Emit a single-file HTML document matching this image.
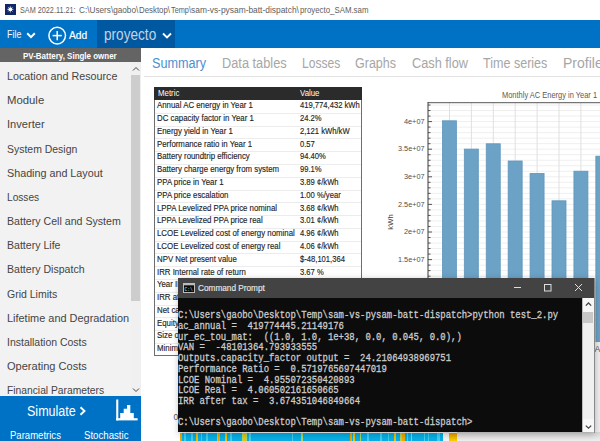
<!DOCTYPE html>
<html><head><meta charset="utf-8"><style>
html,body{margin:0;padding:0;width:600px;height:441px;overflow:hidden;background:#fff}
.r{position:absolute}
.t{position:absolute;white-space:nowrap;font-family:"Liberation Sans",sans-serif;transform-origin:0 0}
.m{position:absolute;white-space:pre;font-family:"Liberation Mono",monospace;color:#cccccc;-webkit-text-stroke:0.25px #cccccc;transform:scaleY(1.12)}
</style></head><body>
<div class="r" style="left:0px;top:0px;width:600px;height:20px;background:#ffffff;"></div>
<div class="r" style="left:5.2px;top:4px;width:10.7px;height:10.7px;background:#122766;"></div>
<svg class="r" style="left:5.2px;top:4px" width="11" height="11" viewBox="0 0 11 11"><g stroke="#fff" stroke-width="0.8" opacity="0.75"><line x1="5.35" y1="2.2" x2="5.35" y2="8.5"/><line x1="2.2" y1="5.35" x2="8.5" y2="5.35"/><line x1="3.1" y1="3.1" x2="7.6" y2="7.6"/><line x1="7.6" y1="3.1" x2="3.1" y2="7.6"/></g><circle cx="5.35" cy="5.35" r="1.9" fill="#fff"/></svg>
<div class="t" style="left:19.70px;top:5.20px;font-size:9.45px;line-height:9.45px;color:#606060;transform:scaleX(0.7690);">SAM 2022.11.21:</div>
<div class="t" style="left:79.20px;top:5.20px;font-size:9.45px;line-height:9.45px;color:#606060;transform:scaleX(0.8687);">C:\Users\gaobo\</div>
<div class="t" style="left:139.20px;top:5.20px;font-size:9.45px;line-height:9.45px;color:#606060;transform:scaleX(0.8315);">Desktop\</div>
<div class="t" style="left:171.00px;top:5.20px;font-size:9.45px;line-height:9.45px;color:#606060;transform:scaleX(0.7774);">Temp\</div>
<div class="t" style="left:191.30px;top:5.20px;font-size:9.45px;line-height:9.45px;color:#606060;transform:scaleX(0.8906);">sam-vs-pysam-batt-dispatch\</div>
<div class="t" style="left:300.00px;top:5.20px;font-size:9.45px;line-height:9.45px;color:#606060;transform:scaleX(0.8310);">proyecto_SAM.sam</div>
<div class="r" style="left:0px;top:20px;width:600px;height:28px;background:#0072c6;"></div>
<div class="r" style="left:97px;top:20px;width:78px;height:28px;background:#0058a0;"></div>
<div class="t" style="left:7.20px;top:30.09px;font-size:10.17px;line-height:10.17px;color:#f4f8fc;transform:scaleX(0.8784);">File</div>
<svg class="r" style="left:26px;top:32px" width="10" height="7" viewBox="0 0 10 7"><polyline points="1.2,1.3 5,5.1 8.8,1.3" fill="none" stroke="#fff" stroke-width="2"/></svg>
<svg class="r" style="left:47px;top:25px" width="21" height="21" viewBox="0 0 21 21"><circle cx="10.2" cy="10.6" r="8.3" fill="none" stroke="#fff" stroke-width="1.5"/><line x1="10.2" y1="6" x2="10.2" y2="15.2" stroke="#fff" stroke-width="1.5"/><line x1="5.6" y1="10.6" x2="14.8" y2="10.6" stroke="#fff" stroke-width="1.5"/></svg>
<div class="t" style="left:69.20px;top:28.96px;font-size:11.63px;line-height:11.63px;color:#ffffff;transform:scaleX(0.8797);-webkit-text-stroke:0.2px #fff;">Add</div>
<div class="t" style="left:104.30px;top:26.63px;font-size:15.80px;line-height:15.80px;color:#c4d4e8;transform:scaleX(0.8615);">proyecto</div>
<svg class="r" style="left:162px;top:32px" width="10" height="8" viewBox="0 0 10 8"><polyline points="1,1.5 5,5.5 9,1.5" fill="none" stroke="#fff" stroke-width="1.8"/></svg>
<div class="r" style="left:0px;top:48px;width:141px;height:14px;background:#646464;"></div>
<div class="t" style="left:23.00px;top:51.26px;font-size:9.74px;line-height:9.74px;color:#ffffff;font-weight:bold;transform:scaleX(0.8181);">PV-Battery, Single owner</div>
<div class="r" style="left:0px;top:62px;width:141px;height:334px;background:#f2f2f2;"></div>
<div class="r" style="left:130.5px;top:62px;width:10.5px;height:334px;background:#f0f0f0;"></div>
<div class="r" style="left:131px;top:75px;width:9px;height:226px;background:#cdcdcd;"></div>
<svg class="r" style="left:132px;top:66px" width="8" height="6" viewBox="0 0 8 6"><polyline points="1,4.5 4,1.5 7,4.5" fill="none" stroke="#444" stroke-width="1"/></svg>
<svg class="r" style="left:132px;top:387px" width="8" height="6" viewBox="0 0 8 6"><polyline points="1,1.5 4,4.5 7,1.5" fill="none" stroke="#444" stroke-width="1"/></svg>
<div class="t" style="left:7.00px;top:70.13px;font-size:11.77px;line-height:11.77px;color:#444444;transform:scaleX(0.9127);">Location and Resource</div>
<div class="t" style="left:7.00px;top:94.30px;font-size:11.77px;line-height:11.77px;color:#444444;transform:scaleX(0.9635);">Module</div>
<div class="t" style="left:7.00px;top:118.47px;font-size:11.77px;line-height:11.77px;color:#444444;transform:scaleX(0.9421);">Inverter</div>
<div class="t" style="left:7.00px;top:142.64px;font-size:11.77px;line-height:11.77px;color:#444444;transform:scaleX(0.8880);">System Design</div>
<div class="t" style="left:7.00px;top:166.81px;font-size:11.77px;line-height:11.77px;color:#444444;transform:scaleX(0.9138);">Shading and Layout</div>
<div class="t" style="left:7.00px;top:190.98px;font-size:11.77px;line-height:11.77px;color:#444444;transform:scaleX(0.8632);">Losses</div>
<div class="t" style="left:7.00px;top:215.15px;font-size:11.77px;line-height:11.77px;color:#444444;transform:scaleX(0.9012);">Battery Cell and System</div>
<div class="t" style="left:7.00px;top:239.32px;font-size:11.77px;line-height:11.77px;color:#444444;transform:scaleX(0.8985);">Battery Life</div>
<div class="t" style="left:7.00px;top:263.49px;font-size:11.77px;line-height:11.77px;color:#444444;transform:scaleX(0.8985);">Battery Dispatch</div>
<div class="t" style="left:7.00px;top:287.66px;font-size:11.77px;line-height:11.77px;color:#444444;transform:scaleX(0.8924);">Grid Limits</div>
<div class="t" style="left:7.00px;top:311.83px;font-size:11.77px;line-height:11.77px;color:#444444;transform:scaleX(0.9290);">Lifetime and Degradation</div>
<div class="t" style="left:7.00px;top:336.00px;font-size:11.77px;line-height:11.77px;color:#444444;transform:scaleX(0.8902);">Installation Costs</div>
<div class="t" style="left:7.00px;top:360.17px;font-size:11.77px;line-height:11.77px;color:#444444;transform:scaleX(0.9381);">Operating Costs</div>
<div class="t" style="left:7.00px;top:384.34px;font-size:11.77px;line-height:11.77px;color:#444444;transform:scaleX(0.8739);">Financial Parameters</div>
<div class="r" style="left:0px;top:396px;width:141px;height:45px;background:#0072c6;"></div>
<div class="t" style="left:26.70px;top:403.70px;font-size:14.53px;line-height:14.53px;color:#ffffff;transform:scaleX(0.8630);">Simulate</div>
<svg class="r" style="left:79px;top:406px" width="8" height="10" viewBox="0 0 8 10"><polyline points="1.5,1.2 5.5,5 1.5,8.8" fill="none" stroke="#fff" stroke-width="1.9"/></svg>
<svg class="r" style="left:115px;top:398px" width="24" height="24" viewBox="0 0 24 24"><rect x="1.2" y="1.5" width="2.1" height="20.9" fill="#fff"/><rect x="1.2" y="20.2" width="21.4" height="2.2" fill="#fff"/><path d="M5.2 21 V15.1 H8.7 V10.7 H12.1 V6.9 H15.3 V15.1 H18.8 V21 Z" fill="#fff"/></svg>
<div class="t" style="left:9.90px;top:430.05px;font-size:11.05px;line-height:11.05px;color:#ffffff;transform:scaleX(0.8638);">Parametrics</div>
<div class="t" style="left:83.50px;top:430.05px;font-size:11.05px;line-height:11.05px;color:#ffffff;transform:scaleX(0.8733);">Stochastic</div>
<div class="r" style="left:141px;top:48px;width:459px;height:393px;background:#ffffff;"></div>
<div class="r" style="left:144px;top:76px;width:456px;height:1px;background:#e3e3e3;"></div>
<div class="t" style="left:152.40px;top:55.54px;font-size:14.24px;line-height:14.24px;color:#4a90d0;transform:scaleX(0.8861);">Summary</div>
<div class="t" style="left:222.00px;top:55.54px;font-size:14.24px;line-height:14.24px;color:#a6a6a6;transform:scaleX(0.8980);">Data tables</div>
<div class="t" style="left:301.70px;top:55.54px;font-size:14.24px;line-height:14.24px;color:#a6a6a6;transform:scaleX(0.8487);">Losses</div>
<div class="t" style="left:355.00px;top:55.54px;font-size:14.24px;line-height:14.24px;color:#a6a6a6;transform:scaleX(0.8778);">Graphs</div>
<div class="t" style="left:411.70px;top:55.54px;font-size:14.24px;line-height:14.24px;color:#a6a6a6;transform:scaleX(0.8954);">Cash flow</div>
<div class="t" style="left:483.30px;top:55.54px;font-size:14.24px;line-height:14.24px;color:#a6a6a6;transform:scaleX(0.8813);">Time series</div>
<div class="t" style="left:563.30px;top:55.54px;font-size:14.24px;line-height:14.24px;color:#a6a6a6;transform:scaleX(0.9833);">Profile</div>
<div class="r" style="left:154px;top:87px;width:208px;height:13px;background:#2b2b2b;"></div>
<div class="t" style="left:157.50px;top:89.12px;font-size:8.72px;line-height:8.72px;color:#ffffff;transform:scaleX(0.9000);">Metric</div>
<div class="t" style="left:300.30px;top:89.12px;font-size:8.72px;line-height:8.72px;color:#ffffff;transform:scaleX(0.9000);">Value</div>
<div class="r" style="left:154px;top:100px;width:206px;height:254.8px;border:1px solid #6e6e6e;border-top:none;background:#fff"></div>
<div class="t" style="left:157.00px;top:101.23px;font-size:9.30px;line-height:9.30px;color:#1e1e1e;transform:scaleX(0.8438);-webkit-text-stroke:0.15px #1e1e1e;">Annual AC energy in Year 1</div>
<div class="t" style="left:300.00px;top:101.23px;font-size:9.30px;line-height:9.30px;color:#1e1e1e;transform:scaleX(0.8203);-webkit-text-stroke:0.15px #1e1e1e;">419,774,432 kWh</div>
<div class="r" style="left:155px;top:112.79px;width:206px;height:1px;background:#ececec;"></div>
<div class="t" style="left:157.00px;top:114.02px;font-size:9.30px;line-height:9.30px;color:#1e1e1e;transform:scaleX(0.8438);-webkit-text-stroke:0.15px #1e1e1e;">DC capacity factor in Year 1</div>
<div class="t" style="left:300.00px;top:114.02px;font-size:9.30px;line-height:9.30px;color:#1e1e1e;transform:scaleX(0.8203);-webkit-text-stroke:0.15px #1e1e1e;">24.2%</div>
<div class="r" style="left:155px;top:125.58px;width:206px;height:1px;background:#ececec;"></div>
<div class="t" style="left:157.00px;top:126.81px;font-size:9.30px;line-height:9.30px;color:#1e1e1e;transform:scaleX(0.8437);-webkit-text-stroke:0.15px #1e1e1e;">Energy yield in Year 1</div>
<div class="t" style="left:300.00px;top:126.81px;font-size:9.30px;line-height:9.30px;color:#1e1e1e;transform:scaleX(0.8203);-webkit-text-stroke:0.15px #1e1e1e;">2,121 kWh/kW</div>
<div class="r" style="left:155px;top:138.37px;width:206px;height:1px;background:#ececec;"></div>
<div class="t" style="left:157.00px;top:139.60px;font-size:9.30px;line-height:9.30px;color:#1e1e1e;transform:scaleX(0.8438);-webkit-text-stroke:0.15px #1e1e1e;">Performance ratio in Year 1</div>
<div class="t" style="left:300.00px;top:139.60px;font-size:9.30px;line-height:9.30px;color:#1e1e1e;transform:scaleX(0.8203);-webkit-text-stroke:0.15px #1e1e1e;">0.57</div>
<div class="r" style="left:155px;top:151.16px;width:206px;height:1px;background:#ececec;"></div>
<div class="t" style="left:157.00px;top:152.39px;font-size:9.30px;line-height:9.30px;color:#1e1e1e;transform:scaleX(0.8438);-webkit-text-stroke:0.15px #1e1e1e;">Battery roundtrip efficiency</div>
<div class="t" style="left:300.00px;top:152.39px;font-size:9.30px;line-height:9.30px;color:#1e1e1e;transform:scaleX(0.8203);-webkit-text-stroke:0.15px #1e1e1e;">94.40%</div>
<div class="r" style="left:155px;top:163.95px;width:206px;height:1px;background:#ececec;"></div>
<div class="t" style="left:157.00px;top:165.18px;font-size:9.30px;line-height:9.30px;color:#1e1e1e;transform:scaleX(0.8438);-webkit-text-stroke:0.15px #1e1e1e;">Battery charge energy from system</div>
<div class="t" style="left:300.00px;top:165.18px;font-size:9.30px;line-height:9.30px;color:#1e1e1e;transform:scaleX(0.8203);-webkit-text-stroke:0.15px #1e1e1e;">99.1%</div>
<div class="r" style="left:155px;top:176.74px;width:206px;height:1px;background:#ececec;"></div>
<div class="t" style="left:157.00px;top:177.97px;font-size:9.30px;line-height:9.30px;color:#1e1e1e;transform:scaleX(0.8438);-webkit-text-stroke:0.15px #1e1e1e;">PPA price in Year 1</div>
<div class="t" style="left:300.00px;top:177.97px;font-size:9.30px;line-height:9.30px;color:#1e1e1e;transform:scaleX(0.8203);-webkit-text-stroke:0.15px #1e1e1e;">3.89 ¢/kWh</div>
<div class="r" style="left:155px;top:189.53px;width:206px;height:1px;background:#ececec;"></div>
<div class="t" style="left:157.00px;top:190.76px;font-size:9.30px;line-height:9.30px;color:#1e1e1e;transform:scaleX(0.8438);-webkit-text-stroke:0.15px #1e1e1e;">PPA price escalation</div>
<div class="t" style="left:300.00px;top:190.76px;font-size:9.30px;line-height:9.30px;color:#1e1e1e;transform:scaleX(0.8203);-webkit-text-stroke:0.15px #1e1e1e;">1.00 %/year</div>
<div class="r" style="left:155px;top:202.32px;width:206px;height:1px;background:#ececec;"></div>
<div class="t" style="left:157.00px;top:203.55px;font-size:9.30px;line-height:9.30px;color:#1e1e1e;transform:scaleX(0.8438);-webkit-text-stroke:0.15px #1e1e1e;">LPPA Levelized PPA price nominal</div>
<div class="t" style="left:300.00px;top:203.55px;font-size:9.30px;line-height:9.30px;color:#1e1e1e;transform:scaleX(0.8203);-webkit-text-stroke:0.15px #1e1e1e;">3.68 ¢/kWh</div>
<div class="r" style="left:155px;top:215.11px;width:206px;height:1px;background:#ececec;"></div>
<div class="t" style="left:157.00px;top:216.34px;font-size:9.30px;line-height:9.30px;color:#1e1e1e;transform:scaleX(0.8438);-webkit-text-stroke:0.15px #1e1e1e;">LPPA Levelized PPA price real</div>
<div class="t" style="left:300.00px;top:216.34px;font-size:9.30px;line-height:9.30px;color:#1e1e1e;transform:scaleX(0.8203);-webkit-text-stroke:0.15px #1e1e1e;">3.01 ¢/kWh</div>
<div class="r" style="left:155px;top:227.90px;width:206px;height:1px;background:#ececec;"></div>
<div class="t" style="left:157.00px;top:229.13px;font-size:9.30px;line-height:9.30px;color:#1e1e1e;transform:scaleX(0.8438);-webkit-text-stroke:0.15px #1e1e1e;">LCOE Levelized cost of energy nominal</div>
<div class="t" style="left:300.00px;top:229.13px;font-size:9.30px;line-height:9.30px;color:#1e1e1e;transform:scaleX(0.8203);-webkit-text-stroke:0.15px #1e1e1e;">4.96 ¢/kWh</div>
<div class="r" style="left:155px;top:240.69px;width:206px;height:1px;background:#ececec;"></div>
<div class="t" style="left:157.00px;top:241.92px;font-size:9.30px;line-height:9.30px;color:#1e1e1e;transform:scaleX(0.8438);-webkit-text-stroke:0.15px #1e1e1e;">LCOE Levelized cost of energy real</div>
<div class="t" style="left:300.00px;top:241.92px;font-size:9.30px;line-height:9.30px;color:#1e1e1e;transform:scaleX(0.8203);-webkit-text-stroke:0.15px #1e1e1e;">4.06 ¢/kWh</div>
<div class="r" style="left:155px;top:253.48px;width:206px;height:1px;background:#ececec;"></div>
<div class="t" style="left:157.00px;top:254.71px;font-size:9.30px;line-height:9.30px;color:#1e1e1e;transform:scaleX(0.8438);-webkit-text-stroke:0.15px #1e1e1e;">NPV Net present value</div>
<div class="t" style="left:300.00px;top:254.71px;font-size:9.30px;line-height:9.30px;color:#1e1e1e;transform:scaleX(0.8203);-webkit-text-stroke:0.15px #1e1e1e;">$-48,101,364</div>
<div class="r" style="left:155px;top:266.27px;width:206px;height:1px;background:#ececec;"></div>
<div class="t" style="left:157.00px;top:267.50px;font-size:9.30px;line-height:9.30px;color:#1e1e1e;transform:scaleX(0.8438);-webkit-text-stroke:0.15px #1e1e1e;">IRR Internal rate of return</div>
<div class="t" style="left:300.00px;top:267.50px;font-size:9.30px;line-height:9.30px;color:#1e1e1e;transform:scaleX(0.8203);-webkit-text-stroke:0.15px #1e1e1e;">3.67 %</div>
<div class="r" style="left:155px;top:279.06px;width:206px;height:1px;background:#ececec;"></div>
<div class="t" style="left:157.00px;top:280.29px;font-size:9.30px;line-height:9.30px;color:#1e1e1e;transform:scaleX(0.8438);-webkit-text-stroke:0.15px #1e1e1e;">Year IRR is achieved</div>
<div class="t" style="left:300.00px;top:280.29px;font-size:9.30px;line-height:9.30px;color:#1e1e1e;transform:scaleX(0.8203);-webkit-text-stroke:0.15px #1e1e1e;">20</div>
<div class="r" style="left:155px;top:291.85px;width:206px;height:1px;background:#ececec;"></div>
<div class="t" style="left:157.00px;top:293.08px;font-size:9.30px;line-height:9.30px;color:#1e1e1e;transform:scaleX(0.8438);-webkit-text-stroke:0.15px #1e1e1e;">IRR at end of project</div>
<div class="t" style="left:300.00px;top:293.08px;font-size:9.30px;line-height:9.30px;color:#1e1e1e;transform:scaleX(0.8203);-webkit-text-stroke:0.15px #1e1e1e;">5.10 %</div>
<div class="r" style="left:155px;top:304.64px;width:206px;height:1px;background:#ececec;"></div>
<div class="t" style="left:157.00px;top:305.87px;font-size:9.30px;line-height:9.30px;color:#1e1e1e;transform:scaleX(0.8438);-webkit-text-stroke:0.15px #1e1e1e;">Net capital cost</div>
<div class="t" style="left:300.00px;top:305.87px;font-size:9.30px;line-height:9.30px;color:#1e1e1e;transform:scaleX(0.8203);-webkit-text-stroke:0.15px #1e1e1e;">$ 123,456,789</div>
<div class="r" style="left:155px;top:317.43px;width:206px;height:1px;background:#ececec;"></div>
<div class="t" style="left:157.00px;top:318.66px;font-size:9.30px;line-height:9.30px;color:#1e1e1e;transform:scaleX(0.8438);-webkit-text-stroke:0.15px #1e1e1e;">Equity</div>
<div class="t" style="left:300.00px;top:318.66px;font-size:9.30px;line-height:9.30px;color:#1e1e1e;transform:scaleX(0.8203);-webkit-text-stroke:0.15px #1e1e1e;">$ 12,345,678</div>
<div class="r" style="left:155px;top:330.22px;width:206px;height:1px;background:#ececec;"></div>
<div class="t" style="left:157.00px;top:331.45px;font-size:9.30px;line-height:9.30px;color:#1e1e1e;transform:scaleX(0.8438);-webkit-text-stroke:0.15px #1e1e1e;">Size of debt</div>
<div class="t" style="left:300.00px;top:331.45px;font-size:9.30px;line-height:9.30px;color:#1e1e1e;transform:scaleX(0.8203);-webkit-text-stroke:0.15px #1e1e1e;">$ 1,234,567</div>
<div class="r" style="left:155px;top:343.01px;width:206px;height:1px;background:#ececec;"></div>
<div class="t" style="left:157.00px;top:344.24px;font-size:9.30px;line-height:9.30px;color:#1e1e1e;transform:scaleX(0.8438);-webkit-text-stroke:0.15px #1e1e1e;">Minimum DSCR</div>
<div class="t" style="left:300.00px;top:344.24px;font-size:9.30px;line-height:9.30px;color:#1e1e1e;transform:scaleX(0.8203);-webkit-text-stroke:0.15px #1e1e1e;">1.30</div>
<svg class="r" style="left:0;top:0" width="600" height="441" viewBox="0 0 600 441"><line x1="428" y1="105.04" x2="600" y2="105.04" stroke="#efefef" stroke-width="1"/><line x1="428" y1="110.56" x2="600" y2="110.56" stroke="#efefef" stroke-width="1"/><line x1="428" y1="116.08" x2="600" y2="116.08" stroke="#efefef" stroke-width="1"/><line x1="428" y1="121.60" x2="600" y2="121.60" stroke="#efefef" stroke-width="1"/><line x1="428" y1="127.12" x2="600" y2="127.12" stroke="#efefef" stroke-width="1"/><line x1="428" y1="132.64" x2="600" y2="132.64" stroke="#efefef" stroke-width="1"/><line x1="428" y1="138.16" x2="600" y2="138.16" stroke="#efefef" stroke-width="1"/><line x1="428" y1="143.68" x2="600" y2="143.68" stroke="#efefef" stroke-width="1"/><line x1="428" y1="149.20" x2="600" y2="149.20" stroke="#efefef" stroke-width="1"/><line x1="428" y1="154.72" x2="600" y2="154.72" stroke="#efefef" stroke-width="1"/><line x1="428" y1="160.24" x2="600" y2="160.24" stroke="#efefef" stroke-width="1"/><line x1="428" y1="165.76" x2="600" y2="165.76" stroke="#efefef" stroke-width="1"/><line x1="428" y1="171.28" x2="600" y2="171.28" stroke="#efefef" stroke-width="1"/><line x1="428" y1="176.80" x2="600" y2="176.80" stroke="#efefef" stroke-width="1"/><line x1="428" y1="182.32" x2="600" y2="182.32" stroke="#efefef" stroke-width="1"/><line x1="428" y1="187.84" x2="600" y2="187.84" stroke="#efefef" stroke-width="1"/><line x1="428" y1="193.36" x2="600" y2="193.36" stroke="#efefef" stroke-width="1"/><line x1="428" y1="198.88" x2="600" y2="198.88" stroke="#efefef" stroke-width="1"/><line x1="428" y1="204.40" x2="600" y2="204.40" stroke="#efefef" stroke-width="1"/><line x1="428" y1="209.92" x2="600" y2="209.92" stroke="#efefef" stroke-width="1"/><line x1="428" y1="215.44" x2="600" y2="215.44" stroke="#efefef" stroke-width="1"/><line x1="428" y1="220.96" x2="600" y2="220.96" stroke="#efefef" stroke-width="1"/><line x1="428" y1="226.48" x2="600" y2="226.48" stroke="#efefef" stroke-width="1"/><line x1="428" y1="232.00" x2="600" y2="232.00" stroke="#efefef" stroke-width="1"/><line x1="428" y1="237.52" x2="600" y2="237.52" stroke="#efefef" stroke-width="1"/><line x1="428" y1="243.04" x2="600" y2="243.04" stroke="#efefef" stroke-width="1"/><line x1="428" y1="248.56" x2="600" y2="248.56" stroke="#efefef" stroke-width="1"/><line x1="428" y1="254.08" x2="600" y2="254.08" stroke="#efefef" stroke-width="1"/><line x1="428" y1="259.60" x2="600" y2="259.60" stroke="#efefef" stroke-width="1"/><line x1="428" y1="265.12" x2="600" y2="265.12" stroke="#efefef" stroke-width="1"/><line x1="428" y1="270.64" x2="600" y2="270.64" stroke="#efefef" stroke-width="1"/><line x1="428" y1="276.16" x2="600" y2="276.16" stroke="#efefef" stroke-width="1"/><line x1="428" y1="281.68" x2="600" y2="281.68" stroke="#efefef" stroke-width="1"/><line x1="428" y1="287.20" x2="600" y2="287.20" stroke="#efefef" stroke-width="1"/><line x1="428" y1="292.72" x2="600" y2="292.72" stroke="#efefef" stroke-width="1"/><line x1="428" y1="298.24" x2="600" y2="298.24" stroke="#efefef" stroke-width="1"/><line x1="428" y1="303.76" x2="600" y2="303.76" stroke="#efefef" stroke-width="1"/><line x1="428" y1="309.28" x2="600" y2="309.28" stroke="#efefef" stroke-width="1"/><line x1="428" y1="314.80" x2="600" y2="314.80" stroke="#efefef" stroke-width="1"/><line x1="428" y1="320.32" x2="600" y2="320.32" stroke="#efefef" stroke-width="1"/><line x1="428" y1="325.84" x2="600" y2="325.84" stroke="#efefef" stroke-width="1"/><line x1="428" y1="331.36" x2="600" y2="331.36" stroke="#efefef" stroke-width="1"/><line x1="428" y1="336.88" x2="600" y2="336.88" stroke="#efefef" stroke-width="1"/><line x1="449.50" y1="103" x2="449.50" y2="342" stroke="#e0e0e0" stroke-width="1"/><line x1="471.40" y1="103" x2="471.40" y2="342" stroke="#e0e0e0" stroke-width="1"/><line x1="493.30" y1="103" x2="493.30" y2="342" stroke="#e0e0e0" stroke-width="1"/><line x1="515.20" y1="103" x2="515.20" y2="342" stroke="#e0e0e0" stroke-width="1"/><line x1="537.10" y1="103" x2="537.10" y2="342" stroke="#e0e0e0" stroke-width="1"/><line x1="559.00" y1="103" x2="559.00" y2="342" stroke="#e0e0e0" stroke-width="1"/><line x1="580.90" y1="103" x2="580.90" y2="342" stroke="#e0e0e0" stroke-width="1"/><line x1="602.80" y1="103" x2="602.80" y2="342" stroke="#e0e0e0" stroke-width="1"/><rect x="442.40" y="120.8" width="14.0" height="221.20" fill="#6ba2c6" stroke="#5e96bd" stroke-width="0.8"/><rect x="464.32" y="149.1" width="14.0" height="192.90" fill="#6ba2c6" stroke="#5e96bd" stroke-width="0.8"/><rect x="486.24" y="143.8" width="14.0" height="198.20" fill="#6ba2c6" stroke="#5e96bd" stroke-width="0.8"/><rect x="508.16" y="161.0" width="14.0" height="181.00" fill="#6ba2c6" stroke="#5e96bd" stroke-width="0.8"/><rect x="530.08" y="173.4" width="14.0" height="168.60" fill="#6ba2c6" stroke="#5e96bd" stroke-width="0.8"/><rect x="552.00" y="200.8" width="14.0" height="141.20" fill="#6ba2c6" stroke="#5e96bd" stroke-width="0.8"/><rect x="573.92" y="171.2" width="14.0" height="170.80" fill="#6ba2c6" stroke="#5e96bd" stroke-width="0.8"/><rect x="595.84" y="156.2" width="14.0" height="185.80" fill="#6ba2c6" stroke="#5e96bd" stroke-width="0.8"/><line x1="428" y1="102.7" x2="600" y2="102.7" stroke="#555" stroke-width="1"/><line x1="428" y1="102" x2="428" y2="343" stroke="#3a3a3a" stroke-width="1"/><line x1="428" y1="105.04" x2="430.5" y2="105.04" stroke="#444" stroke-width="0.9"/><line x1="428" y1="110.56" x2="430.5" y2="110.56" stroke="#444" stroke-width="0.9"/><line x1="428" y1="116.08" x2="430.5" y2="116.08" stroke="#444" stroke-width="0.9"/><line x1="428" y1="121.60" x2="432" y2="121.60" stroke="#444" stroke-width="0.9"/><line x1="428" y1="127.12" x2="430.5" y2="127.12" stroke="#444" stroke-width="0.9"/><line x1="428" y1="132.64" x2="430.5" y2="132.64" stroke="#444" stroke-width="0.9"/><line x1="428" y1="138.16" x2="430.5" y2="138.16" stroke="#444" stroke-width="0.9"/><line x1="428" y1="143.68" x2="430.5" y2="143.68" stroke="#444" stroke-width="0.9"/><line x1="428" y1="149.20" x2="432" y2="149.20" stroke="#444" stroke-width="0.9"/><line x1="428" y1="154.72" x2="430.5" y2="154.72" stroke="#444" stroke-width="0.9"/><line x1="428" y1="160.24" x2="430.5" y2="160.24" stroke="#444" stroke-width="0.9"/><line x1="428" y1="165.76" x2="430.5" y2="165.76" stroke="#444" stroke-width="0.9"/><line x1="428" y1="171.28" x2="430.5" y2="171.28" stroke="#444" stroke-width="0.9"/><line x1="428" y1="176.80" x2="432" y2="176.80" stroke="#444" stroke-width="0.9"/><line x1="428" y1="182.32" x2="430.5" y2="182.32" stroke="#444" stroke-width="0.9"/><line x1="428" y1="187.84" x2="430.5" y2="187.84" stroke="#444" stroke-width="0.9"/><line x1="428" y1="193.36" x2="430.5" y2="193.36" stroke="#444" stroke-width="0.9"/><line x1="428" y1="198.88" x2="430.5" y2="198.88" stroke="#444" stroke-width="0.9"/><line x1="428" y1="204.40" x2="432" y2="204.40" stroke="#444" stroke-width="0.9"/><line x1="428" y1="209.92" x2="430.5" y2="209.92" stroke="#444" stroke-width="0.9"/><line x1="428" y1="215.44" x2="430.5" y2="215.44" stroke="#444" stroke-width="0.9"/><line x1="428" y1="220.96" x2="430.5" y2="220.96" stroke="#444" stroke-width="0.9"/><line x1="428" y1="226.48" x2="430.5" y2="226.48" stroke="#444" stroke-width="0.9"/><line x1="428" y1="232.00" x2="432" y2="232.00" stroke="#444" stroke-width="0.9"/><line x1="428" y1="237.52" x2="430.5" y2="237.52" stroke="#444" stroke-width="0.9"/><line x1="428" y1="243.04" x2="430.5" y2="243.04" stroke="#444" stroke-width="0.9"/><line x1="428" y1="248.56" x2="430.5" y2="248.56" stroke="#444" stroke-width="0.9"/><line x1="428" y1="254.08" x2="430.5" y2="254.08" stroke="#444" stroke-width="0.9"/><line x1="428" y1="259.60" x2="432" y2="259.60" stroke="#444" stroke-width="0.9"/><line x1="428" y1="265.12" x2="430.5" y2="265.12" stroke="#444" stroke-width="0.9"/><line x1="428" y1="270.64" x2="430.5" y2="270.64" stroke="#444" stroke-width="0.9"/><line x1="428" y1="276.16" x2="430.5" y2="276.16" stroke="#444" stroke-width="0.9"/><line x1="428" y1="281.68" x2="430.5" y2="281.68" stroke="#444" stroke-width="0.9"/><line x1="428" y1="287.20" x2="432" y2="287.20" stroke="#444" stroke-width="0.9"/><line x1="428" y1="292.72" x2="430.5" y2="292.72" stroke="#444" stroke-width="0.9"/><line x1="428" y1="298.24" x2="430.5" y2="298.24" stroke="#444" stroke-width="0.9"/><line x1="428" y1="303.76" x2="430.5" y2="303.76" stroke="#444" stroke-width="0.9"/><line x1="428" y1="309.28" x2="430.5" y2="309.28" stroke="#444" stroke-width="0.9"/></svg>
<div class="t" style="left:502.00px;top:91.24px;font-size:8.58px;line-height:8.58px;color:#5a5a5a;transform:scaleX(0.8703);">Monthly AC Energy in Year 1</div>
<div class="t" style="left:404.45px;top:117.78px;font-size:7.70px;line-height:7.70px;color:#505050;transform:scaleX(0.9500);">4e+07</div>
<div class="t" style="left:398.34px;top:145.38px;font-size:7.70px;line-height:7.70px;color:#505050;transform:scaleX(0.9500);">3.5e+07</div>
<div class="t" style="left:404.45px;top:172.98px;font-size:7.70px;line-height:7.70px;color:#505050;transform:scaleX(0.9500);">3e+07</div>
<div class="t" style="left:398.34px;top:200.58px;font-size:7.70px;line-height:7.70px;color:#505050;transform:scaleX(0.9500);">2.5e+07</div>
<div class="t" style="left:404.45px;top:228.18px;font-size:7.70px;line-height:7.70px;color:#505050;transform:scaleX(0.9500);">2e+07</div>
<div class="t" style="left:398.34px;top:255.78px;font-size:7.70px;line-height:7.70px;color:#505050;transform:scaleX(0.9500);">1.5e+07</div>
<div class="t" style="left:380.5px;top:217.8px;font-size:7.7px;line-height:8px;color:#444;transform:rotate(-90deg);transform-origin:center;width:20px;text-align:center">kWh</div>
<div class="r" style="left:594px;top:342px;width:6px;height:99px;background:#f0f0f0;"></div>
<div class="t" style="left:594.50px;top:345.12px;font-size:8.72px;line-height:8.72px;color:#555;">A</div>
<div class="r" style="left:179.5px;top:432.6px;width:263px;height:9px;background:#08b0e6"></div>
<div class="r" style="left:180.30px;top:432.6px;width:2px;height:9px;background:#f0a800"></div><div class="r" style="left:183.50px;top:432.6px;width:2px;height:9px;background:#40d0ee"></div><div class="r" style="left:190.50px;top:432.6px;width:2px;height:9px;background:#40d0ee"></div><div class="r" style="left:195.80px;top:432.6px;width:2px;height:9px;background:#f0c000"></div><div class="r" style="left:200.95px;top:432.6px;width:1.5px;height:9px;background:#40d0ee"></div><div class="r" style="left:206.25px;top:432.6px;width:1.5px;height:9px;background:#40d0ee"></div><div class="r" style="left:216.75px;top:432.6px;width:1.5px;height:9px;background:#a8d860"></div><div class="r" style="left:218.20px;top:432.6px;width:2px;height:9px;background:#f0a800"></div><div class="r" style="left:225.20px;top:432.6px;width:2px;height:9px;background:#f0c000"></div><div class="r" style="left:230.25px;top:432.6px;width:1.5px;height:9px;background:#40d0ee"></div><div class="r" style="left:241.50px;top:432.6px;width:2px;height:9px;background:#a8d860"></div><div class="r" style="left:244.05px;top:432.6px;width:1.5px;height:9px;background:#f0c000"></div><div class="r" style="left:245.55px;top:432.6px;width:1.5px;height:9px;background:#a8d860"></div><div class="r" style="left:249.25px;top:432.6px;width:1.5px;height:9px;background:#40d0ee"></div><div class="r" style="left:291.95px;top:432.6px;width:1.5px;height:9px;background:#40d0ee"></div><div class="r" style="left:301.25px;top:432.6px;width:1.5px;height:9px;background:#a8d860"></div><div class="r" style="left:350.00px;top:432.6px;width:2px;height:9px;background:#f0a800"></div><div class="r" style="left:352.90px;top:432.6px;width:2px;height:9px;background:#f0c000"></div><div class="r" style="left:359.55px;top:432.6px;width:1.5px;height:9px;background:#a8d860"></div><div class="r" style="left:367.25px;top:432.6px;width:1.5px;height:9px;background:#40d0ee"></div><div class="r" style="left:380.05px;top:432.6px;width:1.5px;height:9px;background:#40d0ee"></div><div class="r" style="left:387.55px;top:432.6px;width:1.5px;height:9px;background:#40d0ee"></div><div class="r" style="left:393.70px;top:432.6px;width:2px;height:9px;background:#f0c000"></div><div class="r" style="left:400.45px;top:432.6px;width:1.5px;height:9px;background:#a8d860"></div><div class="r" style="left:402.25px;top:432.6px;width:2.5px;height:9px;background:#f0a800"></div><div class="r" style="left:406.85px;top:432.6px;width:1.5px;height:9px;background:#40d0ee"></div><div class="r" style="left:410.95px;top:432.6px;width:1.5px;height:9px;background:#a8d860"></div><div class="r" style="left:423.75px;top:432.6px;width:1.5px;height:9px;background:#40d0ee"></div><div class="r" style="left:427.85px;top:432.6px;width:1.5px;height:9px;background:#40d0ee"></div><div class="r" style="left:437.00px;top:432.6px;width:3px;height:9px;background:#40d0ee"></div>
<div class="r" style="left:442.6px;top:432px;width:6.5px;height:9px;background:#f4f4f4;"></div>
<div class="r" style="left:449.3px;top:432.6px;width:8px;height:9px;background:linear-gradient(#e8a000,#f8d800)"></div>
<div class="r" style="left:457.3px;top:432px;width:143px;height:9px;background:linear-gradient(#d8d8d8,#efefef)"></div>
<div class="t" style="left:173.50px;top:413.16px;font-size:8.43px;line-height:8.43px;color:#555;">0</div>
<div class="r" style="left:177.5px;top:277.5px;width:416.8px;height:154.2px;background:#0c0c0c;box-shadow:1px 2px 7px rgba(0,0,0,0.28)"></div>
<div class="r" style="left:177.5px;top:277.5px;width:416.8px;height:20.5px;background:#434343;"></div>
<svg class="r" style="left:183px;top:283px" width="12" height="10" viewBox="0 0 12 10"><rect x="0.5" y="0.5" width="11" height="9" fill="#0c0c0c" stroke="#bbb" stroke-width="1"/><rect x="0.5" y="0.5" width="11" height="1.8" fill="#bbb"/><text x="1.5" y="8" font-size="4.5" fill="#ddd" font-family="Liberation Mono">C:\</text></svg>
<div class="t" style="left:198.00px;top:283.65px;font-size:9.16px;line-height:9.16px;color:#e8e8e8;transform:scaleX(0.8991);-webkit-text-stroke:0.15px #e8e8e8;">Command Prompt</div>
<svg class="r" style="left:510px;top:280px" width="80" height="16" viewBox="0 0 80 16"><line x1="4" y1="7.5" x2="11" y2="7.5" stroke="#ddd" stroke-width="1"/><rect x="34.5" y="4.5" width="6.5" height="6.5" fill="none" stroke="#ddd" stroke-width="1"/><line x1="65" y1="4" x2="72" y2="11" stroke="#ddd" stroke-width="1"/><line x1="72" y1="4" x2="65" y2="11" stroke="#ddd" stroke-width="1"/></svg>
<div class="r" style="left:581.8px;top:298px;width:1px;height:134px;background:#bdbdbd;"></div>
<div class="r" style="left:582.5px;top:298px;width:11.8px;height:134px;background:#f0f0f0;"></div>
<div class="r" style="left:582.5px;top:298px;width:11.8px;height:13.8px;background:#f7f7f7;"></div>
<div class="r" style="left:582.5px;top:418.5px;width:11.8px;height:13.5px;background:#f7f7f7;"></div>
<div class="r" style="left:583.3px;top:311.8px;width:10.2px;height:11.4px;background:#c8c8c8;"></div>
<div class="r" style="left:593.8px;top:277.5px;width:1px;height:155px;background:#8a8a8a;"></div>
<svg class="r" style="left:584px;top:300px" width="9" height="8" viewBox="0 0 9 8"><polyline points="1.8,5.6 4.5,3 7.2,5.6" fill="none" stroke="#444" stroke-width="1.3"/></svg>
<svg class="r" style="left:584px;top:423px" width="9" height="8" viewBox="0 0 9 8"><polyline points="1.8,2.6 4.5,5.2 7.2,2.6" fill="none" stroke="#444" stroke-width="1.3"/></svg>
<div class="m" style="left:178.0px;top:312.35px;font-size:8.933px;line-height:8.933px;transform-origin:0 6.85px">C:\Users\gaobo\Desktop\Temp\sam-vs-pysam-batt-dispatch&gt;python test_2.py</div>
<div class="m" style="left:178.0px;top:323.06px;font-size:8.933px;line-height:8.933px;transform-origin:0 6.85px">ac_annual =  419774445.21149176</div>
<div class="m" style="left:178.0px;top:333.77px;font-size:8.933px;line-height:8.933px;transform-origin:0 6.85px">ur_ec_tou_mat:  ((1.0, 1.0, 1e+38, 0.0, 0.045, 0.0),)</div>
<div class="m" style="left:178.0px;top:344.48px;font-size:8.933px;line-height:8.933px;transform-origin:0 6.85px">VAN =  -48101364.793933555</div>
<div class="m" style="left:178.0px;top:355.19px;font-size:8.933px;line-height:8.933px;transform-origin:0 6.85px">Outputs.capacity_factor output =  24.21064938969751</div>
<div class="m" style="left:178.0px;top:365.90px;font-size:8.933px;line-height:8.933px;transform-origin:0 6.85px">Performance Ratio =  0.5719765697447019</div>
<div class="m" style="left:178.0px;top:376.61px;font-size:8.933px;line-height:8.933px;transform-origin:0 6.85px">LCOE Nominal =  4.955072350420893</div>
<div class="m" style="left:178.0px;top:387.32px;font-size:8.933px;line-height:8.933px;transform-origin:0 6.85px">LCOE Real =  4.060502161650665</div>
<div class="m" style="left:178.0px;top:398.03px;font-size:8.933px;line-height:8.933px;transform-origin:0 6.85px">IRR after tax =  3.674351046849664</div>
<div class="m" style="left:178.0px;top:408.74px;font-size:8.933px;line-height:8.933px;transform-origin:0 6.85px"></div>
<div class="m" style="left:178.0px;top:419.45px;font-size:8.933px;line-height:8.933px;transform-origin:0 6.85px">C:\Users\gaobo\Desktop\Temp\sam-vs-pysam-batt-dispatch&gt;</div>
</body></html>
